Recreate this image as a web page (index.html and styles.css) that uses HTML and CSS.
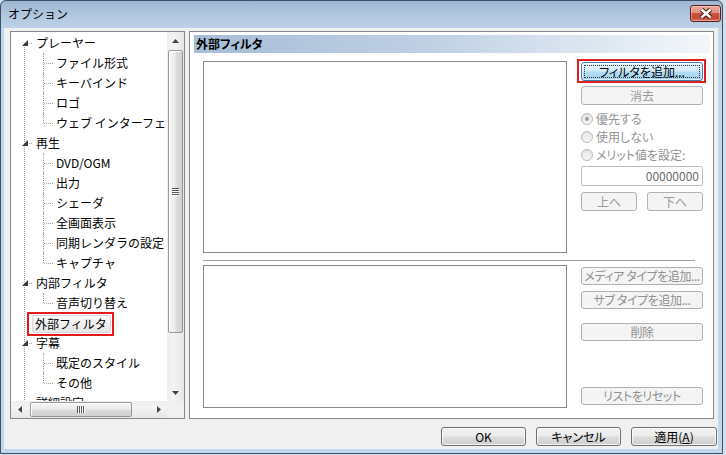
FILE: index.html
```html
<!DOCTYPE html>
<html lang="ja">
<head>
  <meta charset="UTF-8" />
  <title>オプション</title>
  <link rel="stylesheet" href="styles.css">
</head>
<body>
  <div class="window">
    <div class="titlebar">
      <span class="title">オプション</span>
      <button class="close">
        <svg width="29" height="15" viewBox="0 0 29 15">
          <path d="M10.5 3.5 L19.5 11.5 M19.5 3.5 L10.5 11.5" stroke="#4a1d17" stroke-width="4.6" />
          <path d="M10.5 3.5 L19.5 11.5 M19.5 3.5 L10.5 11.5" stroke="#fff" stroke-width="2.4" />
        </svg>
      </button>
    </div>

    <div class="client">
      <div class="main">
        <div class="tree">
          <div class="tree-list">
            <div class="node top"><i class="exp"></i><span class="lbl">プレーヤー</span></div>
            <div class="node child"><span class="lbl">ファイル形式</span></div>
            <div class="node child"><span class="lbl">キーバインド</span></div>
            <div class="node child"><span class="lbl">ロゴ</span></div>
            <div class="node child last"><span class="lbl">ウェブ インターフェース</span></div>
            <div class="node top"><i class="exp"></i><span class="lbl">再生</span></div>
            <div class="node child"><span class="lbl">DVD/OGM</span></div>
            <div class="node child"><span class="lbl">出力</span></div>
            <div class="node child"><span class="lbl">シェーダ</span></div>
            <div class="node child"><span class="lbl">全画面表示</span></div>
            <div class="node child"><span class="lbl">同期レンダラの設定</span></div>
            <div class="node child last"><span class="lbl">キャプチャ</span></div>
            <div class="node top"><i class="exp"></i><span class="lbl">内部フィルタ</span></div>
            <div class="node child last"><span class="lbl">音声切り替え</span></div>
            <div class="node top"><span class="mark mark-tree"><span class="lbl selected">外部フィルタ</span></span></div>
            <div class="node top"><i class="exp"></i><span class="lbl">字幕</span></div>
            <div class="node child"><span class="lbl">既定のスタイル</span></div>
            <div class="node child last"><span class="lbl">その他</span></div>
            <div class="node top"><span class="lbl">詳細設定</span></div>
          </div>

          <div class="vscroll">
            <span class="sb-btn"><svg width="7" height="4"><polygon points="0,4 3.5,0 7,4" /></svg></span>
            <div class="sb-track">
              <div class="thumb-v"><span class="grip-v"></span></div>
            </div>
            <span class="sb-btn"><svg width="7" height="4"><polygon points="0,0 7,0 3.5,4" /></svg></span>
          </div>

          <div class="hscroll">
            <span class="sb-btn"><svg width="4" height="7"><polygon points="4,0 4,7 0,3.5" /></svg></span>
            <div class="sb-track">
              <div class="thumb-h"><span class="grip-h"></span></div>
            </div>
            <span class="sb-btn"><svg width="4" height="7"><polygon points="0,0 0,7 4,3.5" /></svg></span>
          </div>

          <div class="corner"></div>
        </div>

        <div class="panel">
          <div class="panel-head">外部フィルタ</div>
          <div class="panel-body">
            <div class="section">
              <div class="listbox list-top"></div>
              <div class="side">
                <div class="mark mark-btn">
                  <button class="btn btn-focus">フィルタを追加...</button>
                </div>
                <button class="btn btn-off gap-a">消去</button>
                <div class="radios">
                  <div class="radio"><i class="dot checked"></i>優先する</div>
                  <div class="radio"><i class="dot"></i>使用しない</div>
                  <div class="radio"><i class="dot"></i>メリット値を設定:</div>
                </div>
                <div class="field">00000000</div>
                <div class="updown">
                  <button class="btn btn-off">上へ</button>
                  <button class="btn btn-off">下へ</button>
                </div>
              </div>
            </div>

            <div class="sep"></div>

            <div class="section section-low">
              <div class="listbox list-low"></div>
              <div class="side side-low">
                <button class="btn btn-off small">メディア タイプを追加...</button>
                <button class="btn btn-off small gap-b">サブ タイプを追加...</button>
                <button class="btn btn-off small gap-c">削除</button>
                <button class="btn btn-off small gap-d">リストをリセット</button>
              </div>
            </div>
          </div>
        </div>
      </div>

      <div class="footer">
        <button class="btn btn-on">OK</button>
        <button class="btn btn-on">キャンセル</button>
        <button class="btn btn-on apply">適用(<u>A</u>)</button>
      </div>
    </div>
  </div>
</body>
</html>
```

FILE: styles.css
```css
body {
  margin: 0;
  background-color: #d3dfeb;
  font-family: "Noto Sans CJK JP", "Noto Sans", sans-serif;
  font-size: 12px;
  color: #000;
}

.window {
  width: 723px;
  height: 454px;
  box-sizing: border-box;
  border: 1px solid #3d5066;
  border-radius: 6px 6px 0 0;
  background: linear-gradient(#9db6d2, #b1c7df 14px, #bcd1e8 26px, #c1d7ed 27px, #c1d7ed);
  display: flex;
  flex-direction: column;
  overflow: hidden;
}

/* title bar */
.titlebar {
  height: 26px;
  display: flex;
  justify-content: space-between;
  align-items: flex-start;
  padding: 0 1px 0 7px;
}
.title {
  line-height: 26px;
}
.close {
  margin-top: 4px;
  width: 31px;
  height: 17px;
  padding: 0;
  border: 1px solid #5b1f17;
  border-radius: 3px;
  background: linear-gradient(#eaab9c, #de8f7e 45%, #ca543f 50%, #c24832 80%, #d7735b);
  box-shadow: inset 0 0 0 1px rgba(255,255,255,0.35);
  display: flex;
  align-items: center;
  justify-content: center;
}
.close svg {
  display: block;
}

.client {
  flex: 1;
  margin: 1px 4px 4px 3px;
  background-color: #f0f0f0;
  display: flex;
  flex-direction: column;
}
.main {
  display: flex;
  gap: 4px;
  padding: 3px 0 0 6px;
}

/* red markers */
.mark {
  border: 2px solid #e21d1d;
}

/* tree view */
.tree {
  width: 175px;
  height: 388px;
  box-sizing: border-box;
  border: 1px solid #828790;
  background-color: #fff;
  display: grid;
  grid-template-columns: 156px 17px;
  grid-template-rows: 369px 17px;
}
.tree-list {
  overflow: hidden;
  padding-top: 1px;
  background-image: repeating-linear-gradient(#a0a0a0 0 1px, transparent 1px 2px);
  background-size: 1px 100%;
  background-repeat: no-repeat;
  background-position: 13px 11px;
}
.node {
  position: relative;
  height: 20px;
  white-space: nowrap;
}
.node .lbl {
  display: inline-block;
  margin: 1px 0 0 22px;
  padding: 0 3px 0 2px;
  height: 16px;
  line-height: 16px;
  border: 1px solid transparent;
  border-radius: 2px;
}
.child .lbl {
  margin-left: 42px;
}
.mark-tree {
  display: inline-block;
  margin: -1px 0 0 16px;
  padding: 1px 1px 1px 3px;
  background-color: #fff;
  position: relative;
  z-index: 1;
}
.mark-tree .lbl.selected {
  margin: 0;
  border-color: #d9d9d9;
  background: linear-gradient(#fafafa, #e6e6e6);
}
.top::after {
  content: "";
  position: absolute;
  left: 18px;
  top: 10px;
  width: 3px;
  border-top: 1px dotted #a0a0a0;
}
.child::before {
  content: "";
  position: absolute;
  left: 32px;
  top: 0;
  height: 20px;
  border-left: 1px dotted #a0a0a0;
}
.child.last::before {
  height: 10px;
}
.child::after {
  content: "";
  position: absolute;
  left: 33px;
  top: 10px;
  width: 9px;
  border-top: 1px dotted #a0a0a0;
}
.exp {
  position: absolute;
  left: 11px;
  top: 7px;
  width: 0;
  height: 0;
  border-style: solid;
  border-width: 0 0 6px 6px;
  border-color: transparent transparent #3a3a3a transparent;
}

/* scroll bars */
.vscroll, .hscroll {
  display: flex;
  background: linear-gradient(to right, #eeeeee, #f3f3f3 40%, #e6e6e6);
}
.vscroll {
  flex-direction: column;
}
.hscroll {
  background: linear-gradient(#eeeeee, #f3f3f3 40%, #e6e6e6);
}
.sb-btn {
  flex: 0 0 17px;
  height: 17px;
  display: flex;
  align-items: center;
  justify-content: center;
}
.sb-btn svg {
  fill: #454545;
  display: block;
}
.sb-track {
  flex: 1;
  display: flex;
}
.vscroll .sb-track {
  flex-direction: column;
}
.thumb-v, .thumb-h {
  box-sizing: border-box;
  border: 1px solid #979797;
  border-radius: 2px;
  box-shadow: inset 1px 1px 0 #fff;
  display: flex;
  align-items: center;
  justify-content: center;
}
.thumb-v {
  margin: 1px 1px 0 1px;
  height: 283px;
  background: linear-gradient(to right, #f5f5f5, #ececec 45%, #dcdcdc 55%, #d0d0d0);
}
.thumb-h {
  margin: 1px 0 1px 2px;
  width: 102px;
  background: linear-gradient(#f5f5f5, #ececec 45%, #dcdcdc 55%, #d0d0d0);
}
.grip-v {
  width: 7px;
  height: 8px;
  background: repeating-linear-gradient(#555 0 1px, #fdfdfd 1px 2px);
}
.grip-h {
  width: 8px;
  height: 7px;
  background: repeating-linear-gradient(to right, #555 0 1px, #fdfdfd 1px 2px);
}
.corner {
  background-color: #f0f0f0;
}

/* right page */
.panel {
  width: 525px;
  height: 388px;
  box-sizing: border-box;
  border: 1px solid #828790;
  background-color: #fff;
}
.panel-head {
  margin: 3px 3px 0 4px;
  height: 18px;
  line-height: 18px;
  padding-left: 2px;
  font-weight: bold;
  font-feature-settings: "palt" 1;
  background: linear-gradient(to right, #a6bdd7, #bfd0e4 45%, #e4ecf4 85%, #f4f7fa);
}
.panel-body {
  padding: 8px 0 0 13px;
}
.section {
  display: flex;
  gap: 14px;
}
.listbox {
  width: 364px;
  box-sizing: border-box;
  border: 1px solid #828790;
  background-color: #fff;
}
.list-top {
  height: 192px;
}
.list-low {
  height: 143px;
}
.sep {
  margin-top: 7px;
  width: 492px;
  border-top: 1px solid #a0a0a0;
}
.section-low {
  margin-top: 4px;
}
.side {
  width: 122px;
  display: flex;
  flex-direction: column;
  padding-top: 1px;
}
.side-low {
  padding-top: 2px;
}
.mark-btn {
  margin: -3px -3px -2px -4px;
  padding: 1px 1px 0 2px;
  display: flex;
  flex-direction: column;
}

/* buttons */
.btn {
  position: relative;
  height: 19px;
  padding: 0;
  border-radius: 3px;
  font-family: "Noto Sans CJK JP", "Noto Sans", sans-serif;
  font-size: 12px;
  line-height: 17px;
  font-feature-settings: "palt" 1;
  white-space: nowrap;
  color: #000;
}
.btn-on {
  border: 1px solid #707070;
  background: linear-gradient(#f2f2f2, #ebebeb 48%, #dddddd 52%, #cfcfcf);
  box-shadow: inset 0 0 0 1px rgba(255,255,255,0.7);
}
.btn-off {
  border: 1px solid #adb2b5;
  background-color: #f4f4f4;
  color: #9a9a9a;
}
.btn-focus {
  border: 1px solid #3c7fb1;
  background: linear-gradient(#e8f5fc, #d3ecfa 48%, #b4ddf5 52%, #9ed2f0);
  box-shadow: inset 0 0 0 1px rgba(255,255,255,0.6);
}
.btn-focus::after {
  content: "";
  position: absolute;
  left: 2px;
  right: 2px;
  top: 2px;
  bottom: 2px;
  border: 1px dotted #333;
}
.small {
  height: 18px;
  line-height: 16px;
  letter-spacing: -0.4px;
  color: #8f8f8f;
}
.gap-a {
  margin-top: 5px;
}
.gap-b {
  margin-top: 6px;
}
.gap-c {
  margin-top: 14px;
}
.gap-d {
  margin-top: 46px;
}

.radios {
  margin-top: 5px;
}
.radio {
  height: 18px;
  line-height: 18px;
  display: flex;
  align-items: center;
  gap: 3px;
  color: #939393;
  font-feature-settings: "palt" 1;
}
.dot {
  width: 12px;
  height: 12px;
  box-sizing: border-box;
  border: 1px solid #b7b7b7;
  border-radius: 50%;
  background: linear-gradient(#e4e4e4, #f7f7f7);
  display: flex;
  align-items: center;
  justify-content: center;
}
.dot.checked::after {
  content: "";
  width: 4px;
  height: 4px;
  border-radius: 50%;
  background-color: #9a9a9a;
}
.field {
  margin-top: 2px;
  height: 20px;
  box-sizing: border-box;
  border: 1px solid #bdbdbd;
  border-radius: 2px;
  background-color: #fff;
  text-align: right;
  padding-right: 3px;
  line-height: 18px;
  color: #6d6d6d;
}
.updown {
  margin-top: 6px;
  display: flex;
  gap: 10px;
}
.updown .btn {
  width: 56px;
}

.footer {
  margin-top: 8px;
  display: flex;
  justify-content: flex-end;
  gap: 10px;
  padding-right: 1px;
}
.footer .btn {
  width: 85px;
}
.footer .apply {
  width: 86px;
}
```
